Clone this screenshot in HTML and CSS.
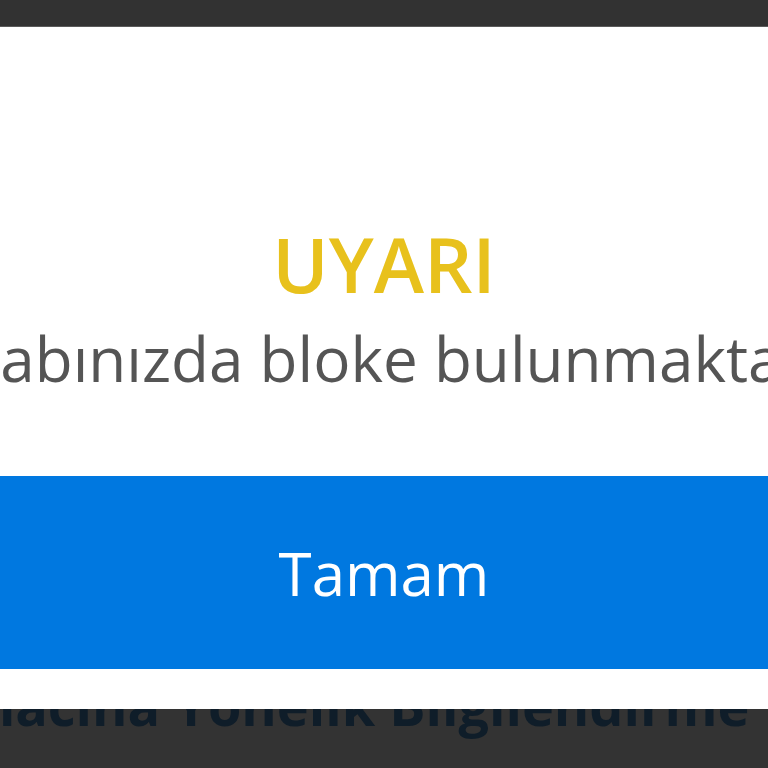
FILE: index.html
```html
<!DOCTYPE html>
<html lang="tr">
<head>
<meta charset="utf-8">
<link rel="stylesheet" href="styles.css">
</head>
<body>
<div class="page">
  <div class="topbar"></div>
  <div class="content">
    <p class="page-title">Kullanım Amacına Yönelik Bilgilendirme Metni</p>
  </div>
</div>
<div class="dialog">
  <div class="dialog-body">
    <h2 class="dialog-title">UYARI</h2>
    <p class="dialog-text">Hesabınızda bloke bulunmaktadır.</p>
  </div>
  <div class="dialog-button">Tamam</div>
</div>
</body>
</html>
```

FILE: styles.css
```css
html, body {
  margin: 0;
  padding: 0;
  width: 768px;
  height: 768px;
  overflow: hidden;
  background: #333333;
  font-family: "Open Sans", "Noto Sans", sans-serif;
}
.page {
  display: flex;
  flex-direction: column;
}
.topbar {
  height: 26px;
  background: #323232;
  border-bottom: 1px solid #5a5a5a;
}
.content {
  padding-top: 648px;
  display: flex;
  justify-content: flex-start;
}
.page-title {
  margin: 0 0 0 -331px;
  white-space: nowrap;
  font-weight: 700;
  font-size: 54px;
  line-height: 60px;
  color: #0f1d29;
}
.dialog {
  position: absolute;
  top: 27px;
  left: -200px;
  right: -200px;
  height: 682px;
  background: #ffffff;
  display: flex;
  flex-direction: column;
}
.dialog-body {
  padding-top: 187px;
  height: 262px;
  display: flex;
  flex-direction: column;
  align-items: center;
}
.dialog-title {
  margin: 0;
  font-weight: 600;
  font-size: 76px;
  line-height: 100px;
  color: #e8c11c;
}
.dialog-text {
  margin: 9px 0 0;
  white-space: nowrap;
  font-weight: 400;
  font-size: 62px;
  line-height: 70px;
  color: #555555;
}
.dialog-button {
  height: 193px;
  background: #0078e0;
  color: #ffffff;
  font-size: 60px;
  display: flex;
  align-items: center;
  justify-content: center;
}
```
